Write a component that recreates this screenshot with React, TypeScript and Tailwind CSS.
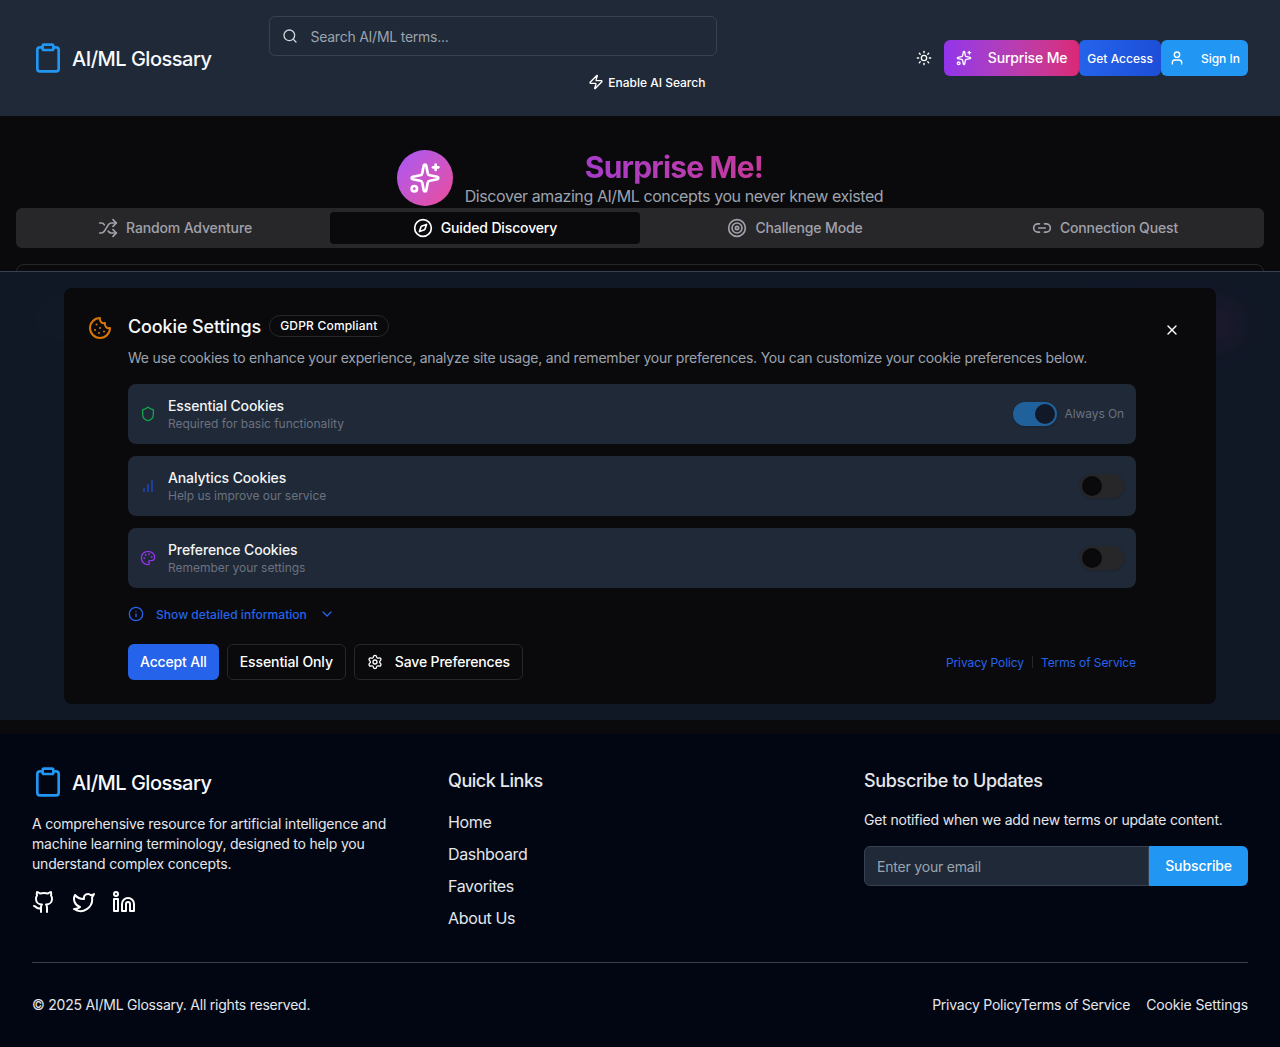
import { ChevronDown, Clipboard, Compass, Cookie, Github, Info, Link2, Linkedin, Palette, Search, Settings, Shield, Shuffle, Sparkles, Sun, Target, Twitter, User, X, Zap } from "lucide-react";

function Logo() {
  return (
    <div className="flex items-center gap-2">
      <Clipboard className="h-8 w-8 text-[#2196f3]" />
      <span className="pt-0.5 text-xl font-[550] tracking-[-0.5px] text-[#f9fafb]">AI/ML Glossary</span>
    </div>
  );
}

function Toggle({ on }: { on?: boolean }) {
  return (
    <div className={`flex h-6 w-11 items-center rounded-full border-2 border-transparent shadow-sm ${on ? "justify-end bg-[#20619b]" : "justify-start bg-[#27272a]"}`}>
      <div className={`h-5 w-5 rounded-full ${on ? "bg-[#111827]" : "bg-[#0a0a0c]"}`} />
    </div>
  );
}

function Bars() {
  return (
    <svg className="h-4 w-4 text-[#1d4ed8]" viewBox="0 0 24 24" fill="none" stroke="currentColor" strokeWidth="2" strokeLinecap="round" strokeLinejoin="round">
      <line x1="18" y1="20" x2="18" y2="4" />
      <line x1="12" y1="20" x2="12" y2="10" />
      <line x1="6" y1="20" x2="6" y2="16" />
    </svg>
  );
}

function CookieRow({ icon, title, sub, on }: { icon: React.ReactNode; title: string; sub: string; on?: boolean }) {
  return (
    <div className="flex items-center justify-between rounded-lg bg-[#1f2937] p-3">
      <div className="flex items-center gap-3">
        {icon}
        <div>
          <div className="text-sm font-[450] tracking-[-0.12px] text-[#f3f4f6]">{title}</div>
          <div className="text-xs tracking-[-0.03px] text-[#6b7280]">{sub}</div>
        </div>
      </div>
      <div className="flex items-center gap-2">
        <Toggle on={on} />
        {on && <span className="text-xs tracking-[-0.1px] text-[#6b7280]">Always On</span>}
      </div>
    </div>
  );
}

const tabs = [
  { label: "Random Adventure", Icon: Shuffle },
  { label: "Guided Discovery", Icon: Compass, active: true },
  { label: "Challenge Mode", Icon: Target },
  { label: "Connection Quest", Icon: Link2 },
];

export default function App() {
  return (
    <div className="relative min-h-[1047px] bg-[#0a0a0c] text-white" style={{ fontFamily: "Inter, sans-serif" }}>
      <header className="flex h-[116px] items-center bg-[#1f2937] px-8">
        <Logo />
        <div className="ml-[58px] flex w-[448px] flex-col items-end">
          <div className="flex h-10 w-full items-center gap-3 rounded-md border border-[#374151] px-3">
            <Search className="h-4 w-4 text-[#d1d5db]" />
            <span className="pt-0.5 text-sm tracking-[-0.24px] text-[#9ca3af]">Search AI/ML terms...</span>
          </div>
          <div className="mt-2 flex h-9 items-center gap-1 px-3 text-xs font-[450]">
            <Zap className="h-4 w-4" />
            <span className="pt-0.5">Enable AI Search</span>
          </div>
        </div>
        <div className="ml-auto flex items-center">
          <div className="mr-0.5 flex h-9 w-9 items-center justify-center">
            <Sun className="h-4 w-4" />
          </div>
          <div className="flex h-9 items-center gap-4 rounded-md bg-gradient-to-r from-[#9333ea] to-[#db2777] px-3 text-sm font-[450] tracking-[-0.16px]">
            <Sparkles className="h-4 w-4" />
            <span>Surprise Me</span>
          </div>
          <div className="flex h-9 items-center rounded-md bg-gradient-to-r from-[#2563eb] to-[#1d4ed8] px-2 pt-0.5 text-xs font-[450]">Get Access</div>
          <div className="flex h-9 items-center gap-4 rounded-md bg-[#2196f3] px-2 text-xs font-[450]">
            <User className="h-4 w-4" />
            <span className="pt-0.5">Sign In</span>
          </div>
        </div>
      </header>

      <main className="h-[618px] overflow-hidden px-4 pt-8">
        <div className="flex items-center justify-center gap-3">
          <div className="flex h-14 w-14 items-center justify-center rounded-full bg-gradient-to-br from-[#a855f7] to-[#ec4899]">
            <Sparkles className="h-8 w-8" />
          </div>
          <div className="text-center">
            <h1 className="bg-gradient-to-r from-[#9333ea] to-[#db2777] bg-clip-text pt-0.5 text-3xl leading-[34px] font-[650] tracking-[-0.8px] text-transparent">Surprise Me!</h1>
            <p className="text-base tracking-[-0.42px] text-[#9ca3af]">Discover amazing AI/ML concepts you never knew existed</p>
          </div>
        </div>
        <div className="grid h-10 grid-cols-4 rounded-md bg-[#27272a] p-1">
          {tabs.map(({ label, Icon, active }) => (
            <div key={label} className={`flex items-center justify-center gap-2 rounded-[4px] text-sm font-[450] tracking-[-0.14px] ${active ? "bg-[#0a0a0c] text-white" : "text-[#a1a1aa]"}`}>
              <Icon className="h-5 w-5" />
              <span>{label}</span>
            </div>
          ))}
        </div>
        <div className="mt-4 h-[440px] rounded-lg border border-[#27272a] p-6">
          <div className="flex items-center justify-between">
            <div className="h-8 w-[300px] rounded bg-[#27272a]" />
            <div className="mt-[13px] h-11 w-[150px] rounded-md bg-gradient-to-r from-[#9333ea] to-[#db2777]" />
          </div>
        </div>
      </main>

      <div className="absolute left-0 right-0 top-[271px] h-[449px] border-t border-[#374151] bg-[#111827]/95 px-16 py-4 backdrop-blur-md">
        <div className="flex h-[416px] gap-4 rounded-lg bg-[#0a0a0c] p-6">
          <Cookie className="mt-1 h-6 w-6 shrink-0 text-[#d97706]" />
          <div className="flex-1">
            <div className="flex h-7 items-center gap-2">
              <h2 className="pt-0.5 text-lg font-[550] tracking-[-0.13px] text-[#f9fafb]">Cookie Settings</h2>
              <span className="rounded-full border border-[#27272a] px-2.5 py-0.5 text-xs font-[450] tracking-[0.2px]">GDPR Compliant</span>
            </div>
            <p className="mt-2 text-sm tracking-[-0.22px] text-[#9ca3af]">We use cookies to enhance your experience, analyze site usage, and remember your preferences. You can customize your cookie preferences below.</p>
            <div className="mt-4 flex flex-col gap-3">
              <CookieRow on icon={<Shield className="h-4 w-4 text-[#16a34a]" />} title="Essential Cookies" sub="Required for basic functionality" />
              <CookieRow icon={<Bars />} title="Analytics Cookies" sub="Help us improve our service" />
              <CookieRow icon={<Palette className="h-4 w-4 text-[#9333ea]" />} title="Preference Cookies" sub="Remember your settings" />
            </div>
            <div className="mt-4 flex h-5 items-center text-xs font-[450] tracking-[0.04px] text-[#2563eb]">
              <Info className="h-4 w-4" />
              <span className="ml-3 pt-0.5">Show detailed information</span>
              <ChevronDown className="ml-3 h-4 w-4" />
            </div>
            <div className="mt-5 flex items-center gap-2 text-sm font-[450] tracking-[-0.16px]">
              <div className="flex h-9 items-center rounded-md bg-[#2563eb] px-3">Accept All</div>
              <div className="flex h-9 items-center rounded-md border border-[#27272a] px-3 tracking-[-0.1px]">Essential Only</div>
              <div className="flex h-9 items-center gap-3 rounded-md border border-[#27272a] px-3">
                <Settings className="h-4 w-4" />
                <span>Save Preferences</span>
              </div>
              <div className="ml-auto flex items-center gap-2 text-xs font-normal tracking-[-0.1px] text-[#2563eb]">
                <span className="pt-0.5">Privacy Policy</span>
                <span className="h-3 w-px bg-[#27272a]" />
                <span className="pt-0.5">Terms of Service</span>
              </div>
            </div>
          </div>
          <div className="-mt-0.5 flex h-10 w-10 shrink-0 items-center justify-center">
            <X className="h-4 w-4" />
          </div>
        </div>
      </div>

      <footer className="h-[313px] bg-[#020612] px-8 pt-8 text-[#e5e7eb]">
        <div className="grid grid-cols-3 gap-8">
          <div>
            <Logo />
            <p className="mt-4 text-sm tracking-[-0.19px]">A comprehensive resource for artificial intelligence and machine learning terminology, designed to help you understand complex concepts.</p>
            <div className="mt-4 flex gap-4 text-white">
              <Github className="h-6 w-6" />
              <Twitter className="h-6 w-6" />
              <Linkedin className="h-6 w-6" />
            </div>
          </div>
          <div>
            <h3 className="pt-0.5 text-lg leading-[26px] font-[450] tracking-[-0.45px]">Quick Links</h3>
            <ul className="mt-4 flex flex-col gap-2 text-base tracking-[-0.35px]">
              <li>Home</li>
              <li>Dashboard</li>
              <li>Favorites</li>
              <li>About Us</li>
            </ul>
          </div>
          <div>
            <h3 className="pt-0.5 text-lg leading-[26px] font-[450] tracking-[-0.35px]">Subscribe to Updates</h3>
            <p className="mt-4 text-sm tracking-[-0.18px]">Get notified when we add new terms or update content.</p>
            <div className="mt-4 flex h-10">
              <div className="flex flex-1 items-center rounded-l-md border border-[#374151] bg-[#1f2937] px-3 pt-0.5 text-sm tracking-[-0.2px] text-[#9ca3af]">Enter your email</div>
              <div className="flex items-center rounded-r-md bg-[#2196f3] px-4 text-sm font-[450] tracking-[-0.1px] text-white">Subscribe</div>
            </div>
          </div>
        </div>
        <div className="mt-8 flex items-center justify-between border-t border-[#374151] pt-8 text-sm tracking-[-0.23px]">
          <span>© 2025 AI/ML Glossary. All rights reserved.</span>
          <div className="flex gap-4">
            <span>Privacy PolicyTerms of Service</span>
            <span className="tracking-[-0.13px]">Cookie Settings</span>
          </div>
        </div>
      </footer>
    </div>
  );
}
